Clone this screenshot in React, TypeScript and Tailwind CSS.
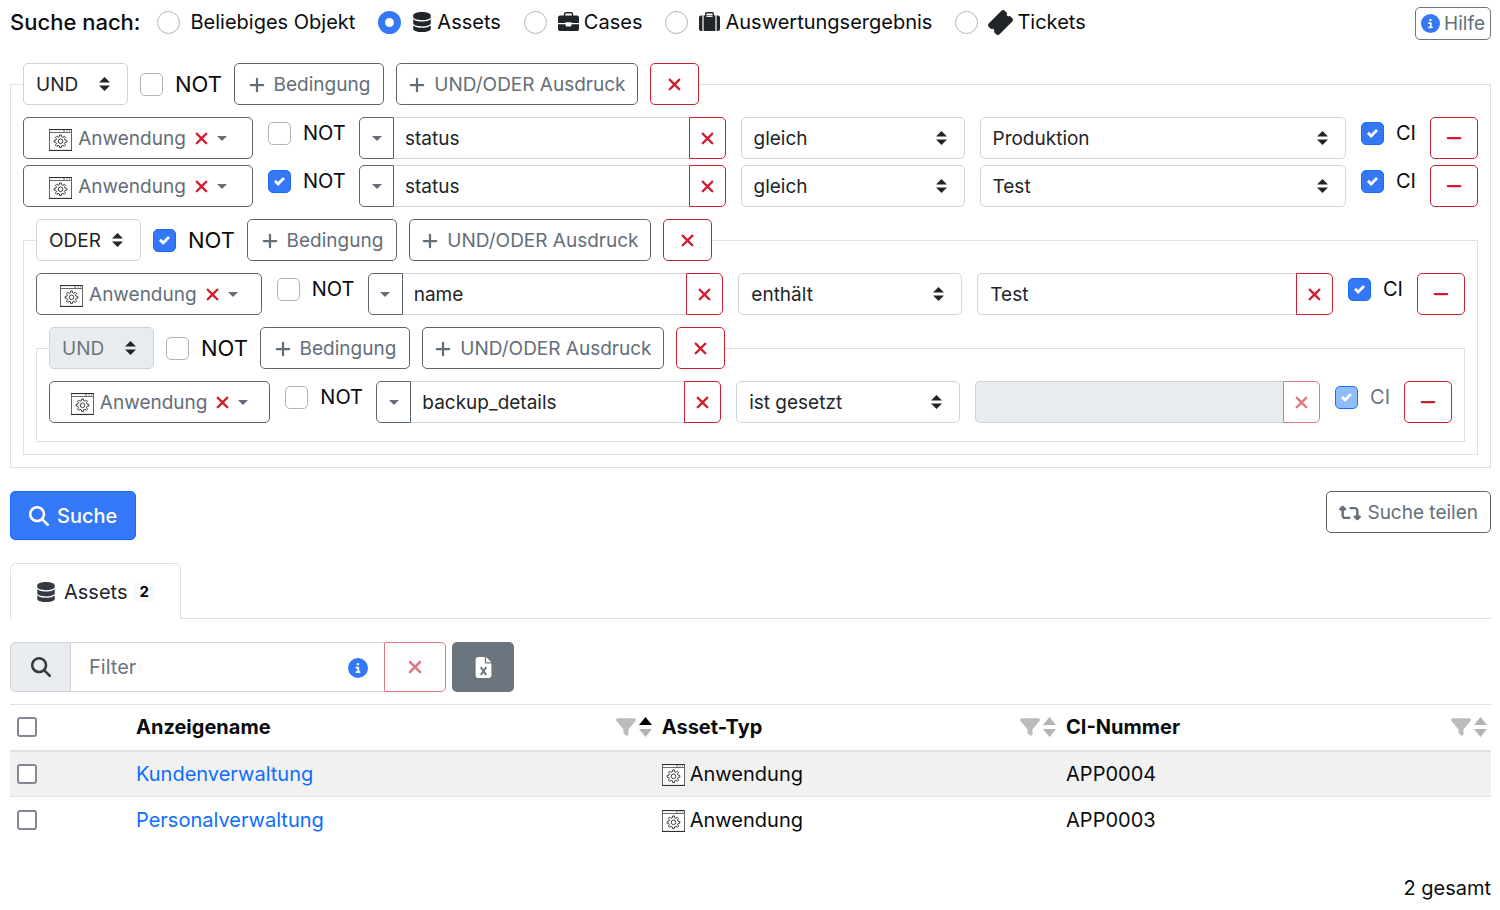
import type { ReactNode } from "react";
import {
  FaCircleInfo,
  FaDatabase,
  FaFileExcel,
  FaFilter,
  FaMagnifyingGlass,
  FaMinus,
  FaPlus,
  FaRetweet,
  FaTicketSimple,
  FaXmark,
} from "react-icons/fa6";

const OBJECT_TYPES = [
  { id: "any", label: "Beliebiges Objekt", icon: null },
  { id: "assets", label: "Assets", icon: <FaDatabase className="size-5 text-[#212529]" /> },
  { id: "cases", label: "Cases", icon: <BriefcaseIcon /> },
  { id: "results", label: "Auswertungsergebnis", icon: <SuitcaseIcon /> },
  { id: "tickets", label: "Tickets", icon: <FaTicketSimple className="size-[23px] -rotate-45 text-[#212529]" /> },
];

const RESULTS = [
  { name: "Kundenverwaltung", type: "Anwendung", ci: "APP0004" },
  { name: "Personalverwaltung", type: "Anwendung", ci: "APP0003" },
];

const outlineButton =
  "flex h-[42px] items-center justify-center rounded-[5px] border border-[#5c6670] bg-white pt-px text-[19px] text-[#646e78]";
const dangerButton =
  "flex h-[42px] items-center justify-center border border-[#cc1f2f] bg-white text-[#cc1f2f] disabled:opacity-60";

// outline of an eight-toothed gear around (cx, cy)
function gearPath(cx: number, cy: number, inner: number, outer: number) {
  const points: string[] = [];
  for (let tooth = 0; tooth < 8; tooth++) {
    const corners = [
      [-0.3, inner],
      [-0.17, outer],
      [0.17, outer],
      [0.3, inner],
    ];
    for (const [offset, r] of corners) {
      const angle = ((tooth + offset) * Math.PI) / 4;
      points.push(`${(cx + r * Math.sin(angle)).toFixed(2)} ${(cy - r * Math.cos(angle)).toFixed(2)}`);
    }
  }
  return `M${points.join("L")}Z`;
}

const GEAR = gearPath(11.5, 12.3, 4.7, 6.4);

function AppIcon() {
  return (
    <svg viewBox="0 0 23 22" className="mt-[3px] h-[22px] w-[23px] shrink-0" fill="none" stroke="#2b2b2b">
      <rect x="0.5" y="0.5" width="22" height="21" fill="#fff" stroke="#666" />
      <path d="M0 0.6h23M0 21.4h23" />
      <path d="M1 3.5h21M15 1v2.2M17.5 2h1M20 2h1" strokeWidth="0.7" />
      <path d={GEAR} strokeWidth="0.9" strokeLinejoin="round" />
      <circle cx="11.5" cy="12.3" r="2.3" strokeWidth="0.9" />
    </svg>
  );
}

function BriefcaseIcon() {
  return (
    <svg viewBox="0 0 21 20" className="h-5 w-[21px]" fill="#212529">
      <path d="M6.5 4V2.2Q6.5 0.8 7.9 0.8h5.2q1.4 0 1.4 1.4V4" fill="none" stroke="#212529" strokeWidth="1.4" />
      <path d="M2 3.6h17q2 0 2 2V11h-7.6v-0.8H7.6V11H0V5.6q0-2 2-2z" />
      <path d="M0 12.2h7.6v1.3q0 1 1 1h3.8q1 0 1-1v-1.3H21v5q0 1.8-2 1.8H2q-2 0-2-1.8z" />
    </svg>
  );
}

function SuitcaseIcon() {
  return (
    <svg viewBox="0 0 21 20" className="h-5 w-[21px]" fill="#212529">
      <path d="M6.7 4V1.9q0-1.1 1.1-1.1h5.4q1.1 0 1.1 1.1V4" fill="none" stroke="#212529" strokeWidth="1.4" />
      <path d="M4.6 3.4h11.8V19H4.6z" />
      <path d="M3.4 3.6V19H2q-2 0-2-2V5.6q0-2 2-2zM17.6 3.6V19H19q2 0 2-2V5.6q0-2-2-2z" />
      <path d="M7.4 4.4h6.2" stroke="#fff" strokeWidth="1" />
    </svg>
  );
}

function Caret({ className = "" }: { className?: string }) {
  return (
    <svg viewBox="0 0 10 5" className={`h-[5px] w-[10px] shrink-0 ${className}`} fill="currentColor">
      <path d="M0 0h10L5 5z" />
    </svg>
  );
}

function SortArrows({ className, up = "currentColor" }: { className: string; up?: string }) {
  return (
    <svg viewBox="0 0 4 5" preserveAspectRatio="none" className={className} fill="currentColor">
      <path d="M2 0L0 2h4z" fill={up} />
      <path d="M2 5L0 3h4z" />
    </svg>
  );
}

function Check({ label, checked, disabled, large }: { label: string; checked?: boolean; disabled?: boolean; large?: boolean }) {
  return (
    <label className="flex items-center gap-3">
      <span className="relative size-[23px] shrink-0">
        <input
          type="checkbox"
          defaultChecked={checked}
          disabled={disabled}
          className="peer block size-[23px] appearance-none rounded-[5px] border border-[#adb5bd] bg-white checked:border-[#1a6dfb] checked:bg-[#3478f7] checked:disabled:bg-[#8fbcfb]"
        />
        <svg viewBox="0 0 8 8" className="pointer-events-none absolute inset-[6px] hidden size-[11px] peer-checked:block" fill="#fff">
          <path d="M6.564.75l-3.59 3.612-1.538-1.55L0 4.26 2.974 7.25 8 2.193z" />
        </svg>
      </span>
      <span className={large ? "text-[22px]" : disabled ? "text-[20px] leading-6 text-[#6c757d]" : "text-[20px] leading-6"}>
        {label}
      </span>
    </label>
  );
}

function Select({ value, label, disabled }: { value: string; label: string; disabled?: boolean }) {
  return (
    <div className="relative w-full">
      <select
        aria-label={label}
        disabled={disabled}
        className="block h-[42px] w-full appearance-none rounded-[5px] border border-[#ced4da] bg-white pt-px pr-8 pl-3 text-[19px] text-[#212529] disabled:bg-[#e9ecef] disabled:text-[#6c757d] disabled:opacity-100"
      >
        <option>{value}</option>
      </select>
      <SortArrows className="pointer-events-none absolute top-[14px] right-[18px] h-[14px] w-[11px] text-[#212529]" />
    </div>
  );
}

function Group({ operator, not, locked, children }: { operator: string; not?: boolean; locked?: boolean; children: ReactNode }) {
  return (
    <fieldset className="min-w-0 border border-[#dee2e6] px-3 pb-3">
      <legend className="mb-3 flex items-center gap-3">
        <div className="w-[105px]">
          <Select label="Verknüpfung" value={operator} disabled={locked} />
        </div>
        <Check label="NOT" checked={not} large />
        <button type="button" className={`${outlineButton} w-[150px] gap-2`}>
          <FaPlus className="size-[18px]" />
          Bedingung
        </button>
        <button type="button" className={`${outlineButton} w-[242px] gap-2`}>
          <FaPlus className="size-[18px]" />
          UND/ODER Ausdruck
        </button>
        <button type="button" aria-label="Ausdruck entfernen" className={`${dangerButton} w-[49px] rounded-[5px]`}>
          <FaXmark className="size-[19px]" />
        </button>
      </legend>
      {children}
    </fieldset>
  );
}

type ConditionProps = {
  field: string;
  operator: string;
  value?: string;
  not?: boolean;
  kind?: "select" | "text";
  disabled?: boolean;
};

function Condition({ field, operator, value = "", not, kind = "text", disabled }: ConditionProps) {
  return (
    <div className="-mr-[15px] mb-[6px] flex">
      <div className="w-1/6 pr-[15px]">
        <button type="button" className={`${outlineButton} w-full`}>
          <AppIcon />
          <span className="ml-[6px]">Anwendung</span>
          <FaXmark className="ml-[6px] size-[19px] text-[#cc1f2f]" />
          <Caret className="ml-[6px]" />
        </button>
      </div>
      <div className="w-[91px] pt-1">
        <Check label="NOT" checked={not} />
      </div>
      <div className="flex min-w-0 flex-1 pr-[15px]">
        <button type="button" aria-label="Feld wählen" className={`${outlineButton} w-[35px] shrink-0 rounded-r-none`}>
          <Caret />
        </button>
        <input
          aria-label="Feld"
          defaultValue={field}
          className="h-[42px] min-w-0 flex-1 border-y border-[#ced4da] px-[11px] pt-px text-[19px] text-[#212529]"
        />
        <button type="button" aria-label="Feld leeren" className={`${dangerButton} w-[37px] shrink-0 rounded-r-[5px]`}>
          <FaXmark className="size-[19px]" />
        </button>
      </div>
      <div className="w-[239px] pr-[15px]">
        <Select label="Operator" value={operator} />
      </div>
      <div className="flex min-w-0 flex-1 pr-[15px]">
        {kind === "select" ? (
          <Select label="Wert" value={value} />
        ) : (
          <>
            <input
              aria-label="Wert"
              defaultValue={value}
              disabled={disabled}
              className="h-[42px] min-w-0 flex-1 rounded-l-[5px] border border-r-0 border-[#ced4da] px-3 pt-px text-[19px] text-[#212529] disabled:bg-[#e9ecef]"
            />
            <button type="button" aria-label="Wert leeren" disabled={disabled} className={`${dangerButton} w-[37px] shrink-0 rounded-r-[5px]`}>
              <FaXmark className="size-[19px]" />
            </button>
          </>
        )}
      </div>
      <div className="w-[69px] pt-1">
        <Check label="CI" checked disabled={disabled} />
      </div>
      <div className="w-[63px] pr-[15px]">
        <button type="button" aria-label="Bedingung entfernen" className={`${dangerButton} w-full rounded-[5px]`}>
          <FaMinus className="size-[18px]" />
        </button>
      </div>
    </div>
  );
}

function HeaderCell({ title, sorted }: { title: string; sorted?: boolean }) {
  return (
    <th className="pr-1 pl-[6px] text-left font-bold" scope="col">
      <div className="flex items-center">
        <span className="flex-1">{title}</span>
        <FaFilter className="mr-[3px] size-5 text-[#b9bbbd]" />
        <SortArrows className="h-5 w-[13px] text-[#b3b3b3]" up={sorted ? "#000" : "currentColor"} />
      </div>
    </th>
  );
}

function RowCheckbox({ label }: { label: string }) {
  return (
    <input
      type="checkbox"
      aria-label={label}
      className="ml-[1px] block size-5 appearance-none rounded-[3px] border-2 border-[#8a8794] bg-white checked:bg-[#3478f7]"
    />
  );
}

export default function App() {
  return (
    <main className="bg-white px-[10px] pt-[7px] pr-[9px] font-['Inter',sans-serif] text-[20px] leading-6 text-[#0a0c0e]">
      <header className="flex h-14 items-start justify-between">
        <div role="radiogroup" aria-label="Suche nach" className="flex h-[30px] items-center">
          <span className="mr-4 text-[22px] font-medium">Suche nach:</span>
          {OBJECT_TYPES.map((type) => (
            <label key={type.id} className="mr-[23px] flex items-center gap-[11px]">
              <input
                type="radio"
                name="object-type"
                defaultChecked={type.id === "assets"}
                className="size-[23px] shrink-0 appearance-none rounded-full border border-[#adb5bd] bg-white checked:border-[7px] checked:border-[#3478f7]"
              />
              <span className="flex items-center gap-[5px]">
                {type.icon}
                {type.label}
              </span>
            </label>
          ))}
        </div>
        <button type="button" className="flex h-[33px] items-center gap-1 rounded-[5px] border border-[#6c757d] px-[5px] text-[19px] text-[#646e78]">
          <FaCircleInfo className="size-[19px] text-[#3478f7]" />
          Hilfe
        </button>
      </header>

      <Group operator="UND">
        <Condition field="status" operator="gleich" kind="select" value="Produktion" />
        <Condition field="status" operator="gleich" kind="select" value="Test" not />
        <div className="mt-3">
          <Group operator="ODER" not>
            <Condition field="name" operator="enthält" value="Test" />
            <div className="mt-3">
              <Group operator="UND" locked>
                <Condition field="backup_details" operator="ist gesetzt" disabled />
              </Group>
            </div>
          </Group>
        </div>
      </Group>

      <div className="mt-[23px] flex items-start justify-between">
        <button type="button" className="flex h-[49px] items-center gap-2 rounded-[5px] border border-[#1a6dfb] bg-[#3478f7] px-[18px] font-medium text-white">
          <FaMagnifyingGlass className="size-5" />
          Suche
        </button>
        <button type="button" className={`${outlineButton} gap-[6px] px-3`}>
          <FaRetweet className="size-[22px]" />
          Suche teilen
        </button>
      </div>

      <div role="tablist" className="mt-[23px] flex border-b border-[#dee2e6]">
        <button
          type="button"
          role="tab"
          aria-selected="true"
          className="-mb-px flex h-14 items-center rounded-t-[6px] border border-b-0 border-[#dee2e6] bg-white px-[25px] text-[#212529]"
        >
          <FaDatabase className="mr-2 size-5 text-[#343a40]" />
          Assets
          <span className="ml-[6px] rounded-[5px] bg-[#f8f9fa] px-[6px] text-[15px] leading-[22px] font-bold text-black">2</span>
        </button>
      </div>

      <div className="mt-[23px] flex h-[50px] gap-[6px]">
        <div className="flex w-[436px]">
          <label htmlFor="filter" className="flex w-[61px] items-center justify-center rounded-l-[5px] border border-[#ced4da] bg-[#e9ecef] text-[#343a40]">
            <FaMagnifyingGlass className="size-5" />
          </label>
          <div className="relative min-w-0 flex-1">
            <input
              id="filter"
              placeholder="Filter"
              className="size-full border-y border-[#ced4da] pr-12 pl-[18px] placeholder:text-[#6c757d]"
            />
            <FaCircleInfo className="absolute top-4 right-4 size-5 text-[#3478f7]" />
          </div>
          <button type="button" disabled aria-label="Filter leeren" className="flex w-[62px] items-center justify-center rounded-r-[5px] border border-[#cc1f2f] text-[#cc1f2f] opacity-60">
            <FaXmark className="size-5" />
          </button>
        </div>
        <button type="button" aria-label="Excel-Export" className="flex w-[62px] items-center justify-center rounded-[5px] bg-[#6c757d] text-white">
          <FaFileExcel className="size-[21px]" />
        </button>
      </div>

      <table className="mt-3 w-full table-fixed border-collapse">
        <colgroup>
          <col className="w-[120px]" />
          <col className="w-[35.5%]" />
          <col className="w-[27.3%]" />
          <col />
        </colgroup>
        <thead>
          <tr className="h-[46px] border-t border-b-2 border-[#dee2e6]">
            <th scope="col" className="px-[6px]">
              <RowCheckbox label="Alle auswählen" />
            </th>
            <HeaderCell title="Anzeigename" sorted />
            <HeaderCell title="Asset-Typ" />
            <HeaderCell title="CI-Nummer" />
          </tr>
        </thead>
        <tbody>
          {RESULTS.map((row) => (
            <tr key={row.ci} className="h-[46px] odd:border-b odd:border-[#dee2e6] odd:bg-[#f1f1f1]">
              <td className="px-[6px]">
                <RowCheckbox label={`${row.name} auswählen`} />
              </td>
              <td className="px-[6px]">
                <a href="#" className="text-[#0d6efd]">
                  {row.name}
                </a>
              </td>
              <td className="px-[6px]">
                <span className="flex items-center gap-[5px]">
                  <AppIcon />
                  {row.type}
                </span>
              </td>
              <td className="px-[6px]">{row.ci}</td>
            </tr>
          ))}
        </tbody>
      </table>

      <p className="mt-[33px] text-right">2 gesamt</p>
    </main>
  );
}
